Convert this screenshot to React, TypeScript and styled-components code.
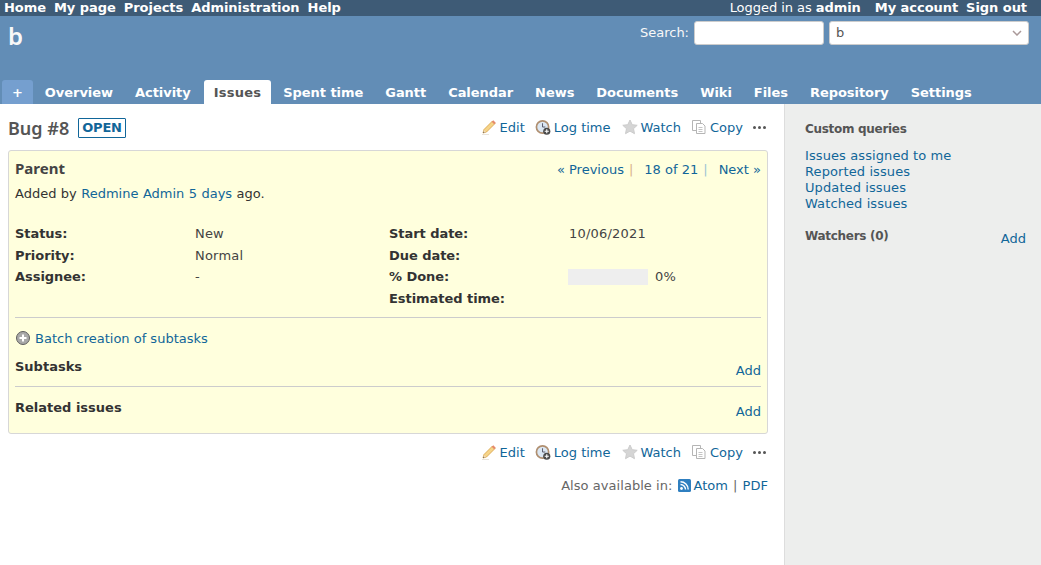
import React from 'react'
import styled, { createGlobalStyle } from 'styled-components'

const GlobalStyle = createGlobalStyle`
  html, body { margin: 0; padding: 0; background: #fff; }
  body { font-family: "DejaVu Sans", Verdana, sans-serif; font-size: 13px; color: #333; }
  a { color: #169; text-decoration: none; }
`

const Page = styled.div`
  width: 1041px;
  height: 565px;
  overflow: hidden;
  display: flex;
  flex-direction: column;
`

const TopMenu = styled.div`
  height: 16px;
  background: #3e5b76;
  color: #fff;
  display: flex;
  justify-content: space-between;
  padding: 0 14px 0 4px;
  line-height: 15px;
  font-size: 13px;
`

const MenuList = styled.div`
  display: flex;
  gap: 8px;
  letter-spacing: -0.05px;
`

const MenuLink = styled.a`
  color: #fff;
  font-weight: bold;
`

const LoggedAs = styled.span`
  margin-right: 6px;
`

const Header = styled.div`
  height: 88px;
  background: #628db6;
  color: #f8f8f8;
  position: relative;
  display: flex;
  justify-content: space-between;
  padding: 0 12px 0 8px;
`

const Title = styled.h1`
  margin: 4px 0 0;
  font-size: 24px;
  line-height: 32px;
  font-family: "Noto Sans", "DejaVu Sans", sans-serif;
  font-weight: 600;
`

const QuickSearch = styled.div`
  display: flex;
  align-items: center;
  height: 24px;
  margin-top: 5px;
  gap: 5px;
`

const SearchLabel = styled.span`
  padding-bottom: 2px;
`

const SearchInput = styled.div`
  width: 130px;
  height: 24px;
  background: #fff;
  border: 1px solid #ccc;
  border-radius: 3px;
  box-sizing: border-box;
`

const JumpBox = styled.div`
  width: 200px;
  height: 24px;
  background: #fff;
  border: 1px solid #ccc;
  border-radius: 3px;
  box-sizing: border-box;
  color: #555;
  padding: 0 6px;
  line-height: 22px;
  display: flex;
  justify-content: space-between;
  align-items: center;
`

const Tabs = styled.div`
  position: absolute;
  left: 2px;
  bottom: 0;
  display: flex;
  gap: 2px;
  letter-spacing: -0.05px;
`

const Tab = styled.a<{ $active?: boolean; $plus?: boolean }>`
  height: 24px;
  line-height: 25px;
  padding: 0 10px;
  font-weight: bold;
  border-radius: 3px 3px 0 0;
  margin-left: ${p => (p.$active ? '1px' : '0')};
  letter-spacing: ${p => (p.$active ? '0.25px' : 'inherit')};
  color: ${p => (p.$active ? '#555' : '#fff')};
  background: ${p => (p.$active ? '#fff' : p.$plus ? '#759fcf' : 'transparent')};
`

const Body = styled.div`
  flex: 1;
  display: flex;
  min-height: 0;
`

const Content = styled.div`
  width: 784px;
  padding: 10px 16px 0 8px;
  box-sizing: border-box;
`

const Sidebar = styled.div`
  flex: 1;
  background: #edeeed;
  border-left: 1px solid #ddd;
  padding: 17px 15px 0 20px;
  color: #555;
`

const SideHead = styled.h3`
  margin: 0;
  font-size: 12px;
  line-height: 16px;
  font-weight: bold;
  letter-spacing: -0.3px;
  color: #555;
`

const SideLinks = styled.div`
  display: flex;
  flex-direction: column;
  margin-top: 11px;
  line-height: 16px;
  letter-spacing: 0.1px;
`

const WatchersRow = styled.div`
  margin-top: 16px;
  display: flex;
  justify-content: space-between;
  align-items: flex-start;
`

const WatchersAdd = styled.a`
  margin-top: 3px;
`

const TitleRow = styled.div`
  display: flex;
  justify-content: space-between;
  align-items: center;
  height: 28px;
  margin-bottom: 8px;
`

const IssueTitle = styled.div`
  display: flex;
  align-items: center;
  gap: 9px;
`

const BugHead = styled.h2`
  margin: 0;
  font-size: 18px;
  font-weight: 600;
  color: #555;
  font-family: "Noto Sans", "DejaVu Sans", sans-serif;
`

const Badge = styled.span`
  border: 1px solid #169;
  color: #169;
  font-size: 13px;
  font-weight: bold;
  line-height: 18px;
  height: 18px;
  padding: 0 3px;
  letter-spacing: -0.2px;
  border-radius: 1px;
`

const Actions = styled.div`
  display: flex;
  align-items: center;
  gap: 10px;
  padding-bottom: 2px;
`

const ActionLink = styled.a`
  display: flex;
  align-items: center;
  gap: 3px;
`

const Dots = styled.span`
  display: flex;
  gap: 2px;
  padding: 0 2px 0 0;
`

const Dot = styled.i`
  width: 3px;
  height: 3px;
  border-radius: 50%;
  background: #555;
`

const IssueBox = styled.div`
  background: #ffd;
  border: 1px solid #d7d7d7;
  border-radius: 3px;
  padding: 6px 6px 10px;
  height: 284px;
  box-sizing: border-box;
`

const SubjectRow = styled.div`
  display: flex;
  justify-content: space-between;
  align-items: center;
  height: 23px;
`

const Subject = styled.h3`
  margin: 0 0 2px;
  font-size: 15px;
  font-weight: 700;
  color: #444;
  font-family: "Noto Sans", "DejaVu Sans", sans-serif;
`

const PrevNext = styled.div`
  display: flex;
  gap: 5px;
  padding-top: 1px;
`

const Sep = styled.span<{ $blue?: boolean }>`
  color: ${p => (p.$blue ? '#9cc4d4' : '#d9b28a')};
  margin-right: 6px;
`

const Author = styled.p`
  margin: 5px 0 0;
  line-height: 18px;
  word-spacing: 0.3px;
`

const Attributes = styled.div`
  display: grid;
  grid-template-columns: 180px 194px 180px 1fr;
  grid-auto-rows: 21.5px;
  margin-top: 20px;
  align-items: center;
`

const AttrLabel = styled.div`
  font-weight: bold;
  color: #333;
  letter-spacing: -0.05px;
`

const AttrValue = styled.div`
  color: #444;
  display: flex;
  align-items: center;
  gap: 7px;
  letter-spacing: 0.2px;
`

const Progress = styled.div`
  width: 80px;
  height: 16px;
  margin-left: -1px;
  background: #eee;
`

const Hr = styled.div`
  height: 1px;
  background: #ccc;
`

const SectionRule = styled(Hr)`
  margin-top: 8px;
`

const BatchRow = styled.div`
  display: flex;
  align-items: center;
  gap: 4px;
  margin-top: 11px;
  height: 18px;
`

const Section = styled.div`
  display: flex;
  justify-content: space-between;
  align-items: flex-start;
  height: 27px;
  padding-top: 12px;
  line-height: 16px;
`

const SectionTitle = styled.span`
  font-weight: bold;
  color: #333;
`

const SectionAdd = styled.a`
  margin-top: 4px;
`

const SectionRuleBelow = styled(Hr)`
  margin-bottom: 1px;
`

const BottomActions = styled(Actions)`
  justify-content: flex-end;
  margin-top: 8px;
  padding-bottom: 0;
  height: 20px;
`

const AlsoRow = styled.p`
  margin: 16px 0 0;
  color: #666;
  display: flex;
  justify-content: flex-end;
  align-items: center;
  gap: 5px;
  letter-spacing: 0.05px;
`

const FeedLink = styled.a`
  display: flex;
  align-items: center;
  gap: 2px;
  margin-left: 1px;
`

const PencilIcon = () => (
  <svg width="16" height="16" viewBox="0 0 16 16">
    <path d="M1 15.500h7" stroke="#e8e4dc" strokeWidth="1" />
    <path d="M2 14l1-3.500 8.500-8.500 2.500 2.500-8.500 8.500z" fill="#f6d488" stroke="#d9a64e" strokeWidth="0.9" />
    <path d="M11.500 2l2.500 2.500" stroke="#e58a6c" strokeWidth="2.200" />
    <path d="M2 14l1-3 2 2z" fill="#efdcc0" />
    <path d="M2 14l.5-1.500 1 1z" fill="#5b5040" />
  </svg>
)

const ClockIcon = () => (
  <svg width="16" height="17" viewBox="0 0 17 17">
    <circle cx="8" cy="8" r="6.500" fill="#dbe7f3" stroke="#b08f70" strokeWidth="1.800" />
    <path d="M8 4v4h3" stroke="#556" strokeWidth="1" fill="none" />
    <circle cx="12.500" cy="12.500" r="3.800" fill="#4a4a4a" />
    <path d="M10.300 12.500h4.400M12.500 10.300v4.400" stroke="#fff" strokeWidth="1.200" />
  </svg>
)

const StarIcon = () => (
  <svg width="17" height="16" viewBox="-1 0 17 16">
    <path d="M8 1l2.200 4.700 5 .6-3.700 3.400 1 5-4.500-2.600-4.500 2.600 1-5L.8 6.300l5-.6z" fill="#d5d5d5" stroke="#ccc" />
  </svg>
)

const CopyIcon = () => (
  <svg width="16" height="16" viewBox="0 0 16 16" fill="#fff" stroke="#b5b5b5">
    <path d="M1.500 1.500h8v10h-8z" />
    <path d="M5.500 4.500h6l2.500 2.500v7.500h-8.500z" />
    <path d="M7.500 8.500h4M7.500 10.500h4M7.500 12.500h4" strokeWidth="0.8" />
  </svg>
)

const AddIcon = () => (
  <svg width="16" height="16" viewBox="0 0 16 16">
    <circle cx="8" cy="8" r="6.500" fill="#a8a8a8" stroke="#5f5f5f" />
    <path d="M4.500 8h7M8 4.500v7" stroke="#fff" strokeWidth="2" />
  </svg>
)

const FeedIcon = () => (
  <svg width="13" height="13" viewBox="0 0 13 13">
    <rect width="13" height="13" rx="1.500" fill="#2f7fc0" />
    <circle cx="3.500" cy="9.500" r="1.400" fill="#fff" />
    <path d="M2.500 5.500a5 5 0 0 1 5 5M2.500 2.800a7.700 7.700 0 0 1 7.700 7.700" stroke="#fff" strokeWidth="1.400" fill="none" />
  </svg>
)

const IssueActions = () => (
  <>
    <ActionLink href="#"><PencilIcon />Edit</ActionLink>
    <ActionLink href="#"><ClockIcon />Log time</ActionLink>
    <ActionLink href="#"><StarIcon />Watch</ActionLink>
    <ActionLink href="#"><CopyIcon />Copy</ActionLink>
    <Dots><Dot /><Dot /><Dot /></Dots>
  </>
)

const tabs = ['Overview', 'Activity', 'Issues', 'Spent time', 'Gantt', 'Calendar', 'News', 'Documents', 'Wiki', 'Files', 'Repository', 'Settings']

const App: React.FC = () => (
  <Page>
    <GlobalStyle />
    <TopMenu>
      <MenuList>
        {['Home', 'My page', 'Projects', 'Administration', 'Help'].map(m => (
          <MenuLink href="#" key={m}>{m}</MenuLink>
        ))}
      </MenuList>
      <MenuList>
        <LoggedAs>Logged in as <b>admin</b></LoggedAs>
        <MenuLink href="#">My account</MenuLink>
        <MenuLink href="#">Sign out</MenuLink>
      </MenuList>
    </TopMenu>
    <Header>
      <Title>b</Title>
      <QuickSearch>
        <SearchLabel>Search:</SearchLabel>
        <SearchInput />
        <JumpBox>
          <span>b</span>
          <svg width="10" height="6" viewBox="0 0 10 6"><path d="M1 1l4 4 4-4" fill="none" stroke="#a99" strokeWidth="1.500" /></svg>
        </JumpBox>
      </QuickSearch>
      <Tabs>
        <Tab href="#" $plus>+</Tab>
        {tabs.map(t => (
          <Tab href="#" key={t} $active={t === 'Issues'}>{t}</Tab>
        ))}
      </Tabs>
    </Header>
    <Body>
      <Content>
        <TitleRow>
          <IssueTitle>
            <BugHead>Bug #8</BugHead>
            <Badge>OPEN</Badge>
          </IssueTitle>
          <Actions><IssueActions /></Actions>
        </TitleRow>
        <IssueBox>
          <SubjectRow>
            <Subject>Parent</Subject>
            <PrevNext>
              <a href="#">« Previous</a><Sep>|</Sep>
              <a href="#">18 of 21</a><Sep $blue>|</Sep>
              <a href="#">Next »</a>
            </PrevNext>
          </SubjectRow>
          <Author>Added by <a href="#">Redmine Admin</a> <a href="#">5 days</a> ago.</Author>
          <Attributes>
            <AttrLabel>Status:</AttrLabel><AttrValue>New</AttrValue>
            <AttrLabel>Start date:</AttrLabel><AttrValue>10/06/2021</AttrValue>
            <AttrLabel>Priority:</AttrLabel><AttrValue>Normal</AttrValue>
            <AttrLabel>Due date:</AttrLabel><AttrValue />
            <AttrLabel>Assignee:</AttrLabel><AttrValue>-</AttrValue>
            <AttrLabel>% Done:</AttrLabel><AttrValue><Progress />0%</AttrValue>
            <span /><span />
            <AttrLabel>Estimated time:</AttrLabel><AttrValue />
          </Attributes>
          <SectionRule />
          <BatchRow><AddIcon /><a href="#">Batch creation of subtasks</a></BatchRow>
          <Section><SectionTitle>Subtasks</SectionTitle><SectionAdd href="#">Add</SectionAdd></Section>
          <SectionRuleBelow />
          <Section><SectionTitle>Related issues</SectionTitle><SectionAdd href="#">Add</SectionAdd></Section>
        </IssueBox>
        <BottomActions><IssueActions /></BottomActions>
        <AlsoRow>
          Also available in: <FeedLink href="#"><FeedIcon />Atom</FeedLink> | <a href="#">PDF</a>
        </AlsoRow>
      </Content>
      <Sidebar>
        <SideHead>Custom queries</SideHead>
        <SideLinks>
          <a href="#">Issues assigned to me</a>
          <a href="#">Reported issues</a>
          <a href="#">Updated issues</a>
          <a href="#">Watched issues</a>
        </SideLinks>
        <WatchersRow>
          <SideHead>Watchers (0)</SideHead>
          <WatchersAdd href="#">Add</WatchersAdd>
        </WatchersRow>
      </Sidebar>
    </Body>
  </Page>
)

export default App
